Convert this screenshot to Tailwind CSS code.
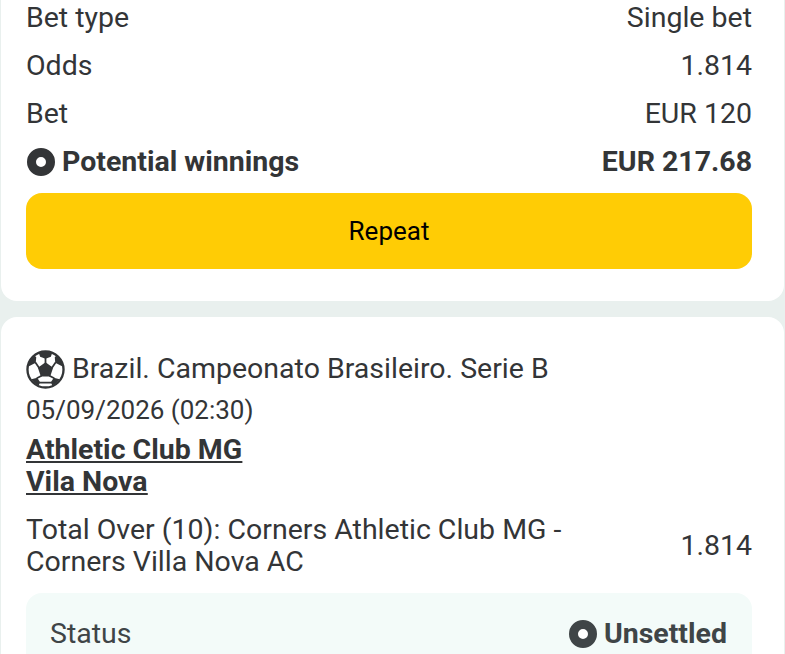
<!DOCTYPE html>
<html lang="en">
  <head>
    <meta charset="UTF-8" />
    <meta name="viewport" content="width=device-width, initial-scale=1.0" />
    <title>Bet details</title>
    <script src="https://cdn.jsdelivr.net/npm/@tailwindcss/browser@4"></script>
  </head>
  <body class="h-[654px] overflow-hidden bg-[#e9f0ee] font-['Roboto',sans-serif] text-[28.5px] text-[#333537]">
    <div class="flex flex-col gap-4 pl-px pr-px">
      <!-- summary card -->
      <section class="flex h-[301px] flex-col rounded-b-2xl bg-white pl-[25px] pr-[32px]">
        <div class="flex h-[42px] items-center justify-between pb-[6px]"><span>Bet type</span><span>Single bet</span></div>
        <div class="flex h-[48px] items-center justify-between"><span>Odds</span><span>1.814</span></div>
        <div class="flex h-[48px] items-center justify-between"><span>Bet</span><span>EUR 120</span></div>
        <div class="flex h-[48px] items-center justify-between font-bold">
          <span class="flex items-center gap-[7px]">
            <span class="ml-px size-[28px] rounded-full border-[9px] border-[#333537] bg-white"></span>
            Potential winnings
          </span>
          <span>EUR 217.68</span>
        </div>
        <button class="mt-[7px] flex h-[76px] items-center justify-center rounded-2xl bg-[#ffcc05] text-[26px] text-black">Repeat</button>
      </section>

      <!-- selection card -->
      <section class="flex flex-col rounded-t-2xl bg-white pl-[25px] pr-[32px] pt-[30px]">
        <div class="flex h-[44px] items-center gap-[7px]">
          <svg class="size-[39px] shrink-0" viewBox="0 0 40 40">
            <circle cx="20" cy="20" r="18.500" fill="#fff" stroke="#333537" stroke-width="2.400" />
            <path fill="#333537" d="M20 12.500l7.800 5.700-3 9.100h-9.600l-3-9.100zM13 2.500C16 1.500 24 1.500 27 2.500l-1.500 4.500L20 9l-5.500-2zM2.500 17C3 11.500 5.500 8 8.500 5.500l2 2-.5 5.500zM37.500 17C37 11.500 34.500 8 31.500 5.500l-2 2 .5 5.500zM5.500 30c2 3 4 5 7.500 6.500l1.500-3.500-3-4.500zM34.500 30c-2 3-4 5-7.500 6.500L25.500 33l3-4.500z" />
            <path fill="none" stroke="#333537" stroke-width="1.800" d="M20 8v6M9.500 12.500l4 6M30.500 12.500l-4 6M11 29l5-2.600M29 29l-5-2.600M13.500 33.500h13" />
          </svg>
          <span>Brazil. Campeonato Brasileiro. Serie B</span>
        </div>
        <div class="mt-[2px] flex h-[34px] items-center text-[26px]">05/09/2026 (02:30)</div>
        <div class="mt-[7px] flex flex-col font-bold underline leading-[32px]">
          <a>Athletic Club MG</a>
          <a>Vila Nova</a>
        </div>
        <div class="mt-[16px] flex items-center justify-between leading-[32px]">
          <p class="w-[560px]">Total Over (10): Corners Athletic Club MG - Corners Villa Nova AC</p>
          <span>1.814</span>
        </div>
        <div class="mt-[15px] flex h-[80px] items-start justify-between rounded-t-2xl bg-[#f3fbf9] pl-[24px] pr-[25px] pt-[20px] text-[#3f4547]">
          <span>Status</span>
          <span class="flex items-center gap-[7px] font-bold">
            <span class="size-[28px] rounded-full border-[9px] border-[#3f4547] bg-white"></span>
            Unsettled
          </span>
        </div>
      </section>
    </div>
  </body>
</html>
